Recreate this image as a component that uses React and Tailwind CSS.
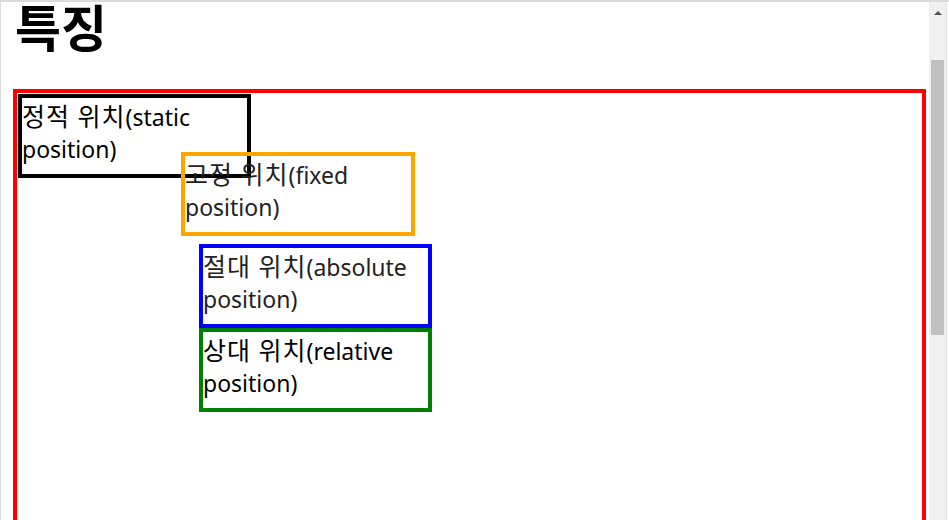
export default function App() {
  const font = "font-['Noto_Sans','Noto_Sans_CJK_KR',sans-serif]";
  const ko = "text-[25px] tracking-[1px]";

  return (
    <div className={`w-[949px] h-[520px] overflow-hidden flex bg-white border-t-2 border-l border-[#dadada] text-black ${font}`}>
      <main className="flex-1 min-w-0 pl-[12px] pr-[3px]">
        <h1 className="ml-[2px] text-[50px] font-bold leading-[52px] h-[87px]">특징</h1>

        <div className="relative border-4 border-[#ff0000] h-[460px]">
          <div className="ml-px mt-px w-[233px] h-[84px] border-4 border-black pt-[2px] text-[23px] leading-[32px]">
            <span className={ko}>정적 위치</span>(static position)
          </div>

          <div className="absolute left-[164px] top-[59px] w-[234px] h-[84px] border-4 border-[#ffa500] pt-[2px] text-[23px] leading-[32px] text-[#222]">
            <span className={ko}>고정 위치</span>(fixed position)
          </div>

          <div className="ml-[182px] mt-[66px] flex flex-col">
            <div className="w-[233px] h-[84px] border-4 border-[#0000ff] pt-[2px] text-[23px] leading-[32px] text-[#222]">
              <span className={ko}>절대 위치</span>(absolute position)
            </div>
            <div className="w-[233px] h-[84px] border-4 border-[#008000] pt-[2px] text-[23px] leading-[32px]">
              <span className={ko}>상대 위치</span>(relative position)
            </div>
          </div>
        </div>
      </main>

      <div className="w-[17px] bg-[#f0f0f0] flex flex-col items-center">
        <div className="h-[17px] flex items-center justify-center pt-[4px]">
          <div className="w-0 h-0 border-l-[4px] border-r-[4px] border-b-[4px] border-l-transparent border-r-transparent border-b-[#505050]" />
        </div>
        <div className="mt-[41px] w-[13px] h-[275px] bg-[#c1c1c1]" />
      </div>
      <div className="w-[3px] border-l border-[#e2e2e2] bg-white" />
    </div>
  );
}
